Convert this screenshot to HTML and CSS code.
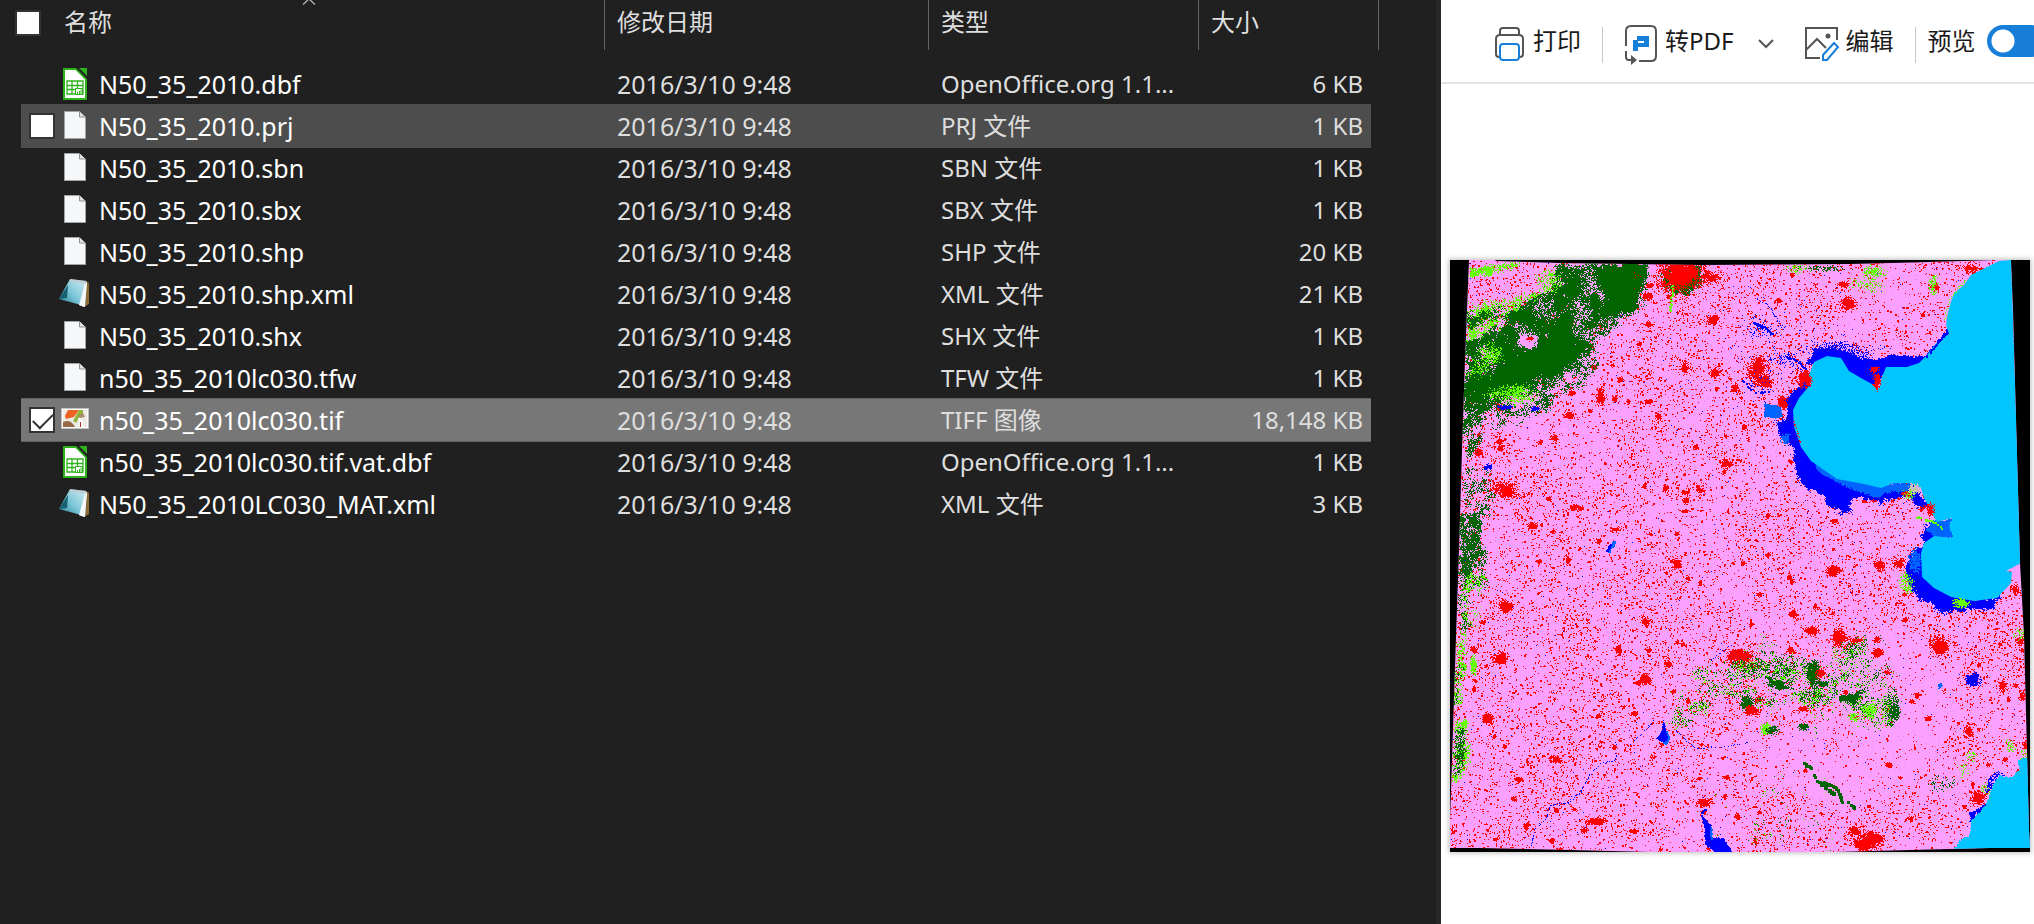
FILE: index.html
```html
<!DOCTYPE html>
<html lang="zh-CN">
<head>
<meta charset="utf-8">
<title>N50_35_2010</title>
<link rel="stylesheet" href="styles.css">
</head>
<body>
<svg class="defs" aria-hidden="true">
  <symbol id="i-page" viewBox="0 0 22 28">
    <path d="M.5.5h15l6 6v21H.5z" fill="#f6f7f8" stroke="#a3a6a9"/>
    <path d="M15.500.5v5.500h6" fill="#dfe1e3" stroke="#8e9194"/>
  </symbol>
  <symbol id="i-calc" viewBox="0 0 24 32">
    <path d="M1 1h12l10 10v20H1z" fill="#fff" stroke="#2fb31c" stroke-width="2" stroke-linejoin="round"/>
    <path d="M13 0l11 11V8l-8-8z" fill="#222"/>
    <path d="M16 0h8v8z" fill="#2fb31c"/>
    <path d="M4 13h16v13H4zM4 17.500h16M4 21.500h16M9 13v13M14.500 13v13" fill="none" stroke="#2fb31c" stroke-width="1.300"/>
    <path d="M12.500 20.500h7v6h-7z" fill="#fff" stroke="#2fb31c"/>
    <path d="M14.500 26v-2M16.500 26v-3M18 26v-4.500" stroke="#2fb31c"/>
  </symbol>
  <symbol id="i-note" viewBox="0 0 31 30">
    <linearGradient id="g-note" x1="0" y1="1" x2="1" y2="0"><stop offset="0" stop-color="#247f95"/><stop offset=".45" stop-color="#7cc6d8"/><stop offset="1" stop-color="#d3edf3"/></linearGradient>
    <path d="M27 3l3 2v21l-5 3z" fill="#8a6a35"/>
    <path d="M25 3l3 1-3 25-5-2z" fill="#dfe6e8"/>
    <path d="M11 1l16 2-5 24L0 21z" fill="url(#g-note)"/>
    <path d="M0 21L9 7 8 20z" fill="#17606f"/>
    <path d="M20 27l6-22 2 0-2 24z" fill="#f4f8f9"/>
    <path d="M11 2.500l16 2" stroke="#c3c7c9" stroke-width="3" stroke-dasharray="1.500 1"/>
  </symbol>
  <symbol id="i-tif" viewBox="0 0 28 21">
    <path d="M.5.5h27v20H.5z" fill="#fff" stroke="#c2c2c2"/>
    <path d="M2 2h24v17H2z" fill="#eceae4"/>
    <path d="M7 2h11l-5 7-8 2-1-3z" fill="#ee6322"/>
    <path d="M18 2h4v5l-4 3-3 5-3-2z" fill="#8fb43a"/>
    <path d="M17 8l5-3 2 4-5 1z" fill="#a88a66"/>
    <path d="M2 14c5-2 9-1 12 5H2z" fill="#966a45"/>
    <path d="M18 10l2 8M21 12v7" stroke="#fff" stroke-width="2"/>
    <path d="M19.500 14v5" stroke="#b5322e"/>
  </symbol>
</svg>
<main class="window">
  <section class="files" aria-label="文件">
    <svg class="sort" viewBox="0 0 14 5"><path d="M1 4.500L7-1l6 5.500" fill="none" stroke="#b5b5b5" stroke-width="1.300"/></svg>
    <table class="list">
      <colgroup><col class="c-name"><col class="c-date"><col class="c-type"><col class="c-size"><col class="c-end"></colgroup>
      <thead>
        <tr>
          <th><div class="cell head-name"><input type="checkbox" class="tick" aria-label="全选">名称</div></th>
          <th>修改日期</th><th>类型</th><th>大小</th><th></th>
        </tr>
      </thead>
      <tbody>
        <tr><td><div class="cell"><input type="checkbox" class="tick" aria-label="N50_35_2010.dbf"><svg class="ico"><use href="#i-calc" x="4" width="24" height="32"/></svg>N50_35_2010.dbf</div></td><td>2016/3/10 9:48</td><td>OpenOffice.org 1.1...</td><td>6 KB</td><td></td></tr>
        <tr class="hover"><td><div class="cell"><input type="checkbox" class="tick" aria-label="N50_35_2010.prj"><svg class="ico"><use href="#i-page" x="5" y="1" width="22" height="28"/></svg>N50_35_2010.prj</div></td><td>2016/3/10 9:48</td><td>PRJ 文件</td><td>1 KB</td><td></td></tr>
        <tr><td><div class="cell"><input type="checkbox" class="tick" aria-label="N50_35_2010.sbn"><svg class="ico"><use href="#i-page" x="5" y="1" width="22" height="28"/></svg>N50_35_2010.sbn</div></td><td>2016/3/10 9:48</td><td>SBN 文件</td><td>1 KB</td><td></td></tr>
        <tr><td><div class="cell"><input type="checkbox" class="tick" aria-label="N50_35_2010.sbx"><svg class="ico"><use href="#i-page" x="5" y="1" width="22" height="28"/></svg>N50_35_2010.sbx</div></td><td>2016/3/10 9:48</td><td>SBX 文件</td><td>1 KB</td><td></td></tr>
        <tr><td><div class="cell"><input type="checkbox" class="tick" aria-label="N50_35_2010.shp"><svg class="ico"><use href="#i-page" x="5" y="1" width="22" height="28"/></svg>N50_35_2010.shp</div></td><td>2016/3/10 9:48</td><td>SHP 文件</td><td>20 KB</td><td></td></tr>
        <tr><td><div class="cell"><input type="checkbox" class="tick" aria-label="N50_35_2010.shp.xml"><svg class="ico"><use href="#i-note" width="31" height="30"/></svg>N50_35_2010.shp.xml</div></td><td>2016/3/10 9:48</td><td>XML 文件</td><td>21 KB</td><td></td></tr>
        <tr><td><div class="cell"><input type="checkbox" class="tick" aria-label="N50_35_2010.shx"><svg class="ico"><use href="#i-page" x="5" y="1" width="22" height="28"/></svg>N50_35_2010.shx</div></td><td>2016/3/10 9:48</td><td>SHX 文件</td><td>1 KB</td><td></td></tr>
        <tr><td><div class="cell"><input type="checkbox" class="tick" aria-label="n50_35_2010lc030.tfw"><svg class="ico"><use href="#i-page" x="5" y="1" width="22" height="28"/></svg>n50_35_2010lc030.tfw</div></td><td>2016/3/10 9:48</td><td>TFW 文件</td><td>1 KB</td><td></td></tr>
        <tr class="selected"><td><div class="cell"><input type="checkbox" class="tick" checked aria-label="n50_35_2010lc030.tif"><svg class="ico"><use href="#i-tif" x="2" y="4" width="28" height="21"/></svg>n50_35_2010lc030.tif</div></td><td>2016/3/10 9:48</td><td>TIFF 图像</td><td>18,148 KB</td><td></td></tr>
        <tr><td><div class="cell"><input type="checkbox" class="tick" aria-label="n50_35_2010lc030.tif.vat.dbf"><svg class="ico"><use href="#i-calc" x="4" width="24" height="32"/></svg>n50_35_2010lc030.tif.vat.dbf</div></td><td>2016/3/10 9:48</td><td>OpenOffice.org 1.1...</td><td>1 KB</td><td></td></tr>
        <tr><td><div class="cell"><input type="checkbox" class="tick" aria-label="N50_35_2010LC030_MAT.xml"><svg class="ico"><use href="#i-note" width="31" height="30"/></svg>N50_35_2010LC030_MAT.xml</div></td><td>2016/3/10 9:48</td><td>XML 文件</td><td>3 KB</td><td></td></tr>
      </tbody>
    </table>
  </section>
  <section class="preview" aria-label="预览">
    <header class="toolbar">
      <button class="tool" type="button">
        <svg width="30" height="34" viewBox="0 0 30 34" fill="none" stroke-width="2"><path d="M5 7V4q0-3 3-3h13q3 0 3 3v3M5 30H4q-3 0-3-3V12q0-4 4-4h19q4 0 4 4v15q0 3-3 3h-1" stroke="#555"/><rect x="5" y="17" width="19" height="16" rx="3" fill="#fff" stroke="#187fd8"/></svg>打印</button>
      <span class="rule"></span>
      <button class="tool pdf" type="button">
        <svg width="34" height="40" viewBox="0 0 34 40" fill="none"><path d="M2 22V7q0-5 5-5h20q5 0 5 5v25q0 5-5 5H15M2 27v6q0 3 3 3h3" stroke="#555" stroke-width="2"/><path d="M7 31l6 5-6 5z" fill="#555"/><path d="M13 12h12v11H14v4H9V16h4z" fill="#187fd8"/><path d="M14 17h6v2h-6z" fill="#fff"/></svg>转PDF</button>
      <button class="more" type="button" aria-label="更多"><svg width="18" height="12" viewBox="0 0 18 12"><path d="M2 2l7 7 7-7" fill="none" stroke="#555" stroke-width="2"/></svg></button>
      <button class="tool edit" type="button">
        <svg width="36" height="36" viewBox="0 0 36 36" fill="none" stroke="#555" stroke-width="2"><path d="M32 14V2H1v30h14M1 24l11-11 9 9"/><circle cx="23" cy="10" r="2.500" fill="#555" stroke="none"/><path d="M18 34v-5l11-12 4 4-11 13z" stroke="#187fd8"/></svg>编辑</button>
      <span class="rule"></span>
      <label class="switch">预览<input type="checkbox" checked></label>
    </header>
    <div class="stage"><canvas id="map" class="map" width="580" height="592" role="img" aria-label="n50_35_2010lc030.tif"></canvas></div>
  </section>
</main>
<script src="map.js"></script>
</body>
</html>
```
FILE: styles.css
```css
* { box-sizing: border-box; }
body {
  margin: 0;
  background: #fff;
  font-family: "Noto Sans", "Noto Sans CJK SC", sans-serif;
}
.defs { position: absolute; width: 0; height: 0; }
.window {
  display: grid;
  grid-template-columns: 1441fr 593fr;
  min-height: 100vh;
}
.files {
  position: relative;
  min-width: 0;
  overflow: hidden;
  background: #202020;
  border-right: 5px solid #272727;
  color: #dedede;
  padding-left: 21px;
}
.sort { position: absolute; left: 302px; top: 0; width: 14px; height: 5px; }
.list {
  width: 1358px;
  table-layout: fixed;
  border-collapse: separate;
  border-spacing: 0;
  font-size: 24px;
  line-height: 32px;
}
.c-name { width: 583px; }
.c-date { width: 324px; }
.c-type { width: 270px; }
.c-size { width: 173px; }
.c-end { width: 8px; }
th {
  height: 50px;
  padding: 0 12px 6px;
  font-weight: 400;
  text-align: left;
  border-left: 1px solid #636363;
}
th:first-child { padding-left: 0; border-left: 0; }
th:last-child { padding: 0; border-left: 0; border-right: 1px solid #636363; }
thead::after { content: ""; display: block; height: 13px; }
td { height: 42px; padding: 0 12px 0 13px; white-space: nowrap; }
td:first-child { padding-left: 8px; color: #fff; }
td:nth-child(-n+2) { font-size: 25px; }
td:nth-child(4) { text-align: right; padding-right: 8px; }
td:last-child { padding: 0; }
.cell { display: flex; align-items: center; }
.ico { width: 32px; height: 32px; margin: 0 8px 0 4px; flex: none; }
.tick {
  appearance: none;
  flex: none;
  width: 26px;
  height: 26px;
  margin: 0;
  background: #fff;
  border: 2px solid #333;
  visibility: hidden;
}
.head-name .tick { margin: 2px 23px 0 -6px; }
.head-name .tick, .hover .tick, .selected .tick { visibility: visible; }
.tick:checked { display: grid; }
.tick:checked::after {
  content: "";
  width: 18px;
  height: 9px;
  margin: 4px 2px;
  border: solid #333;
  border-width: 0 0 2px 2px;
  transform: rotate(-45deg);
}
.hover td:not(:last-child) { background: #4d4d4d; box-shadow: 0 -1px #4d4d4d, 0 1px #4d4d4d; }
.selected td:not(:last-child) { background: #777; box-shadow: 0 -1px #636363, 0 1px #636363; }

.preview { min-width: 0; overflow: hidden; }
.toolbar {
  display: flex;
  align-items: center;
  height: 84px;
  padding: 0 0 0 54px;
  border-bottom: 2px solid #e3e3e3;
  color: #1a1a1a;
  font-size: 24px;
  line-height: 32px;
  white-space: nowrap;
}
.toolbar > * { flex: none; }
.tool {
  display: flex;
  align-items: center;
  gap: 8px;
  padding: 0;
  border: 0;
  background: none;
  color: inherit;
  font: inherit;
}
.tool svg { overflow: visible; margin-top: 10px; margin-bottom: 4px; }
.rule { width: 1px; height: 36px; margin: 8px 12px 0 21px; background: #c8c8c8; }
.pdf { margin-left: 9px; gap: 7px; }
.more { display: flex; padding: 6px 0 0; margin: 0 30px 0 23px; border: 0; background: none; }
.edit { gap: 5px; }
.switch { display: flex; align-items: center; gap: 11px; }
.switch input {
  appearance: none;
  width: 60px;
  height: 32px;
  margin: 8px 0;
  border-radius: 16px;
  background: radial-gradient(circle at 16px 16px, #fff 11px, #187fd8 12px);
}
.stage { padding: 176px 4px 0 9px; }
.map { display: block; width: 100%; background: #000; box-shadow: 0 0 5px 1px #bbb; }
```
FILE: map.js
```js
const W = 580, H = 592;
const ctx = document.getElementById('map').getContext('2d');
const PINK = '#fba0ff', RED = '#ff0000', DARK = '#006400', LIME = '#64ff00',
      BLUE = '#0000ff', MID = '#0064ff', SEA = '#00c5ff';

let seed = 20100350;
const rnd = () => {
  seed = (seed + 0x6d2b79f5) | 0;
  let t = Math.imul(seed ^ (seed >>> 15), 1 | seed);
  t = (t + Math.imul(t ^ (t >>> 7), 61 | t)) ^ t;
  return ((t ^ (t >>> 14)) >>> 0) / 4294967296;
};
const grid = Float32Array.from({ length: 65536 }, rnd);
const lattice = (x, y) => grid[((y & 255) << 8) | (x & 255)];
const noise = (x, y) => {
  const i = Math.floor(x), j = Math.floor(y), u = x - i, v = y - j;
  const a = lattice(i, j), b = lattice(i + 1, j), c = lattice(i, j + 1), d = lattice(i + 1, j + 1);
  return (a + (b - a) * u) * (1 - v) + (c + (d - c) * u) * v;
};
const rough = (x, y) => noise(x / 14, y / 14) * 0.4 + noise(x / 5, y / 5) * 0.35 + noise(x / 2, y / 2) * 0.25;

const dot = (c, x, y, w = 1, h = 1) => { ctx.fillStyle = c; ctx.fillRect(x | 0, y | 0, w, h); };
const trace = pts => {
  const p = new Path2D();
  for (let i = 0; i < pts.length; i += 2) p.lineTo(pts[i], pts[i + 1]);
  p.closePath();
  return p;
};
/* polygon with a ragged edge and gaps; fill = share of pixels kept, ragged = edge shift */
const area = (c, pts, ragged = 2, fill = 1) => {
  const p = trace(pts);
  const xs = pts.filter((_, i) => i % 2 === 0), ys = pts.filter((_, i) => i % 2);
  const x1 = Math.max(...xs) + ragged, y1 = Math.max(...ys) + ragged;
  for (let y = Math.min(...ys) - ragged; y <= y1; y++)
    for (let x = Math.min(...xs) - ragged; x <= x1; x++) {
      const dx = (rough(x + 300, y) - 0.5) * 4 * ragged + (rnd() - 0.5) * ragged;
      const dy = (rough(x, y + 500) - 0.5) * 4 * ragged + (rnd() - 0.5) * ragged;
      if ((fill >= 1 || rough(x * 1.3 + 70, y * 1.3) * 0.7 + rnd() * 0.3 < 0.27 + fill * 0.46) &&
          ctx.isPointInPath(p, x + dx, y + dy)) dot(c, x, y);
    }
};
const blob = (c, cx, cy, rx, ry = rx, fill = 1) => {
  for (let y = -2 * ry; y <= 2 * ry; y++)
    for (let x = -2 * rx; x <= 2 * rx; x++) {
      const d = (x * x) / (rx * rx) + (y * y) / (ry * ry);
      const n = rough(cx + x, cy + y) + (rnd() - 0.5) * 0.35;
      if (fill >= 1 ? d < 4 * n * n : d < 3 && n * 0.5 + rnd() * 0.5 < fill * (1 - d / 3.2)) dot(c, cx + x, cy + y);
    }
};
const stream = (c, pts, w = 1, keep = 0.8) => {
  for (let i = 0; i + 3 < pts.length; i += 2) {
    const n = Math.hypot(pts[i + 2] - pts[i], pts[i + 3] - pts[i + 1]);
    for (let k = 0; k < n; k++)
      if (rnd() < keep) dot(c, pts[i] + (pts[i + 2] - pts[i]) * k / n + rnd() * 1.5, pts[i + 1] + (pts[i + 3] - pts[i + 1]) * k / n + rnd() * 1.5, w, w);
  }
};

ctx.fillStyle = '#000';
ctx.fillRect(0, 0, W, H);
const frame = trace([19, 0, 45, 0, 46, 1, 110, 3, 250, 5, 400, 4, 480, 2, 545, 0, 561, 0, 563, 50, 570, 303, 574, 375, 579, 570, 580, 588, 540, 588, 460, 590, 385, 592, 200, 592, 120, 590, 30, 588, 0, 588, 0, 560, 6, 377, 9, 290, 12, 190, 15, 100]);
ctx.save();
ctx.clip(frame);
dot(PINK, 0, 0, W, H);

/* villages */
for (let y = 0; y < H; y++)
  for (let x = 0; x < W; x++) {
    const sparse = Math.hypot((x - 445) / 60, (y - 440) / 70) < 1 || Math.hypot((x - 390) / 80, (y - 500) / 40) < 1 ? 0.35 : 1;
    const t = 0.05 * sparse * (0.45 + 1.2 * noise(x / 40 + 9, y / 40)) * (rough(x, y) > 0.5 ? 1.5 : 0.7);
    const r = rnd();
    if (r < t) dot(RED, x, y, rnd() < 0.3 ? 2 : 1, rnd() < 0.25 ? 2 : 1);
    else if (r > 0.985) dot(rnd() < 0.5 ? '#f07fc8' : '#e08be8', x, y);
    else if (r > 0.9835) dot(BLUE, x, y);
  }
for (let i = 0; i < 170; i++) blob(RED, (rnd() * W) | 0, (rnd() * H) | 0, 2 + (rnd() * 2 | 0), 2 + (rnd() * 1.5 | 0));

/* western mountains */
area(LIME, [19, 8, 70, 1, 68, 7, 30, 15, 19, 15], 3, 0.6);
area(LIME, [17, 42, 80, 36, 110, 8, 118, 30, 70, 60, 17, 88], 5, 0.4);
area(DARK, [17, 52, 45, 44, 60, 60, 18, 66], 5, 0.4);
area(DARK, [108, 4, 200, 4, 196, 28, 190, 44, 172, 54, 152, 62, 140, 74, 136, 92, 124, 108, 112, 116, 96, 122, 78, 134, 60, 140, 40, 150, 22, 168, 12, 182, 14, 150, 16, 82, 50, 68, 58, 52, 75, 42, 95, 32, 106, 15], 5, 0.86);
area(DARK, [150, 4, 197, 4, 194, 28, 184, 42, 165, 48, 150, 35], 3);
area(DARK, [60, 100, 100, 70, 130, 70, 130, 98, 100, 115, 20, 140, 18, 118], 5);
area(DARK, [130, 62, 178, 50, 198, 40, 170, 64, 148, 80, 150, 100, 132, 124, 110, 140, 80, 158, 30, 172, 14, 186, 14, 160, 60, 142, 110, 110], 5, 0.4);
area(DARK, [14, 184, 30, 174, 32, 182, 16, 198], 3, 0.5);
blob(PINK, 78, 79, 8, 7);
blob(PINK, 132, 58, 9, 18, 0.45);
blob(PINK, 94, 50, 10, 12, 0.45);
blob(PINK, 138, 20, 8, 14, 0.45);
blob(RED, 79, 78, 3, 2);
blob(LIME, 37, 94, 13, 11, 0.5);
blob(LIME, 60, 134, 22, 8, 0.6);
blob(PINK, 50, 140, 22, 8, 0.35);
blob(LIME, 100, 20, 12, 9, 0.4);
blob(LIME, 30, 110, 12, 10, 0.35);
area(DARK, [12, 206, 38, 212, 42, 250, 30, 260, 34, 300, 32, 328, 22, 345, 10, 380, 8, 330, 10, 260], 5, 0.38);
area(DARK, [10, 254, 32, 250, 28, 290, 24, 318, 10, 312], 4, 0.62);
area(LIME, [14, 318, 34, 310, 36, 335, 26, 360, 12, 368], 5, 0.35);
area(LIME, [6, 375, 12, 370, 14, 440, 4, 448], 4, 0.6);
area(DARK, [5, 405, 11, 405, 9, 445, 4, 445], 3, 0.5);
area(LIME, [4, 460, 16, 462, 20, 495, 14, 515, 3, 522], 4, 0.6);
area(DARK, [4, 470, 14, 470, 15, 500, 8, 516, 3, 512], 3, 0.6);
blob(LIME, 23, 405, 3, 8, 0.9);
area(DARK, [210, 8, 250, 6, 252, 22, 238, 32, 212, 28], 4, 0.75);
stream(LIME, [222, 22, 219, 50], 2);

/* southern hills */
[[345, 408, 30, 14, .45], [365, 435, 16, 9, .5], [300, 408, 24, 14, .42], [315, 440, 14, 8, .45], [410, 395, 22, 20, .44], [420, 450, 20, 18, .45], [440, 445, 8, 18, .5], [265, 425, 26, 20, .38], [245, 440, 20, 14, .36], [230, 460, 14, 8, .35], [330, 560, 50, 40, .25], [400, 430, 40, 34, .36], [310, 420, 34, 30, .36]].forEach(([x, y, a, b, f]) => {
  blob(LIME, x - 3, y + 2, a, b, f * 0.78);
  blob(DARK, x, y, a, b, f * 0.85);
});
area(DARK, [316, 416, 330, 420, 345, 428, 330, 428, 318, 424], 2, .8);
area(DARK, [386, 436, 402, 434, 418, 428, 404, 442, 388, 442], 2, .8);
blob(DARK, 363, 413, 5, 11, .9);
blob(DARK, 373, 423, 6, 3);
blob(DARK, 297, 443, 6, 6, .9);
blob(LIME, 420, 449, 7, 7, .7);
blob(LIME, 404, 457, 6, 4, .7);
blob(DARK, 445, 450, 4, 9, .8);
blob(LIME, 316, 469, 5, 5, .8);
blob(DARK, 322, 470, 5, 4, .8);
blob(DARK, 353, 467, 5, 3);
stream(DARK, [353, 502, 362, 508], 3, .6);
stream(DARK, [362, 514, 369, 522], 3, .6);
stream(DARK, [367, 520, 385, 526, 391, 540], 3);
stream(DARK, [370, 523, 382, 532], 4, .6);
stream(DARK, [396, 540, 404, 547], 3, .6);
blob(DARK, 490, 522, 12, 8, .4);
[[521, 497], [512, 508], [535, 530], [560, 485], [570, 373], [575, 495]].forEach(([x, y]) => blob(LIME, x, y, 6, 6, .45));
blob(LIME, 483, 25, 4, 9, .7);
blob(LIME, 423, 11, 10, 5, .6);
blob(LIME, 415, 24, 14, 8, .35);
blob(DARK, 375, 8, 24, 3, .45);
blob(LIME, 345, 9, 12, 4, .45);

/* towns */
[[232, 15, 19, 15], [262, 17, 7, 4], [196, 36, 5, 3], [150, 136, 5, 8], [57, 230, 10, 7], [262, 60, 5, 4], [198, 64, 4, 3], [234, 107, 4, 4], [264, 112, 5, 4], [284, 128, 4, 4], [207, 156, 3, 4], [277, 203, 5, 4], [250, 230, 4, 3], [124, 247, 4, 3], [82, 266, 4, 3], [165, 269, 7, 3], [120, 155, 4, 3], [104, 178, 4, 3], [308, 108, 10, 12], [314, 121, 6, 5], [399, 43, 8, 6], [393, 24, 6, 3], [355, 116, 7, 7], [333, 142, 5, 5], [521, 8, 8, 5], [462, 233, 4, 3], [480, 249, 4, 6], [428, 304, 5, 4], [448, 303, 6, 5], [384, 310, 8, 4], [54, 346, 6, 6], [51, 398, 7, 5], [24, 389, 4, 3], [37, 458, 5, 5], [105, 499, 6, 3], [143, 561, 8, 3], [226, 303, 5, 5], [195, 361, 4, 4], [195, 419, 5, 5], [218, 404, 4, 3], [291, 396, 11, 7], [388, 378, 6, 8], [406, 380, 7, 3], [361, 370, 6, 4], [490, 387, 8, 8], [301, 451, 6, 4], [340, 390, 4, 4], [552, 425, 4, 5], [518, 471, 4, 5], [528, 538, 7, 6], [252, 543, 6, 4], [417, 582, 10, 10], [405, 570, 6, 4], [305, 581, 3, 5], [354, 448, 5, 3], [370, 413, 4, 4], [437, 412, 4, 3], [429, 392, 4, 3], [572, 436, 3, 5], [575, 485, 3, 5], [565, 330, 4, 5], [570, 380, 5, 4]].forEach(t => {
  blob(RED, ...t);
  blob(RED, t[0], t[1], t[2] * 2, t[3] * 2, .27);
});

/* rivers and lakes */
blob(BLUE, 345, 95, 55, 40, .2);
blob(BLUE, 315, 68, 18, 14, .36);
blob(BLUE, 305, 130, 18, 14, .34);
blob(BLUE, 338, 98, 14, 8, .42);
stream(BLUE, [303, 62, 312, 66, 322, 73], 2);
stream(BLUE, [306, 38, 318, 45, 326, 58, 332, 68], 1);
stream(BLUE, [332, 95, 345, 99, 355, 108], 2, .6);
stream(BLUE, [290, 118, 304, 132, 318, 130], 2, .3);
stream(BLUE, [225, 470, 245, 488, 270, 486, 300, 482], 1, .35);
stream(BLUE, [203, 460, 190, 474, 180, 483], 1, .4);
stream(BLUE, [166, 492, 164, 500, 150, 503, 138, 515], 1, .6);
stream(BLUE, [138, 515, 130, 532, 117, 542, 100, 545, 95, 558, 84, 568, 83, 576, 80, 592], 1, .6);
stream(BLUE, [260, 400, 275, 388, 284, 384], 1, .5);
stream(MID, [162, 280, 158, 291], 3);
stream(BLUE, [159, 284, 156, 291], 2);
blob(BLUE, 38, 206, 4, 3);
blob(BLUE, 55, 147, 6, 2);
blob(BLUE, 85, 148, 4, 2);
blob(BLUE, 523, 419, 6, 6);
blob(MID, 490, 425, 3, 3);
area(MID, [216, 470, 220, 478, 217, 485, 212, 482], 1);
area(BLUE, [213, 460, 216, 472, 218, 478, 215, 482, 206, 478, 211, 472], 1);
area(BLUE, [250, 552, 255, 558, 261, 565, 261, 577, 273, 577, 282, 592, 266, 592, 255, 584, 254, 570], 1);
stream(BLUE, [254, 548, 251, 554], 2);
stream(MID, [260, 566, 260, 578], 2);

/* coast */
blob(BLUE, 385, 90, 36, 8, .5);
blob(BLUE, 410, 108, 14, 12, .6);
area(BLUE, [357, 105, 364, 89, 380, 87, 395, 92, 410, 98, 425, 100, 440, 95, 462, 96, 475, 96, 490, 76, 500, 64, 500, 76, 478, 100, 460, 108, 434, 110, 428, 125, 420, 124, 404, 118, 390, 105, 365, 106], 2);
area(BLUE, [346, 126, 360, 122, 362, 200, 390, 215, 431, 226, 465, 226, 480, 247, 468, 246, 455, 234, 445, 238, 430, 242, 420, 237, 403, 236, 400, 252, 395, 254, 380, 245, 368, 234, 352, 222, 345, 209, 344, 190, 330, 172, 326, 160, 338, 156, 336, 140], 3);
area(BLUE, [345, 195, 362, 205, 400, 232, 402, 252, 392, 254, 376, 244, 366, 230, 350, 224], 5, .9);
area(BLUE, [476, 262, 490, 270, 485, 325, 524, 338, 550, 336, 542, 346, 525, 350, 500, 352, 485, 346, 470, 338, 460, 325, 455, 310, 460, 300, 468, 288], 4);
area(MID, [362, 202, 388, 214, 431, 224, 460, 222, 462, 230, 440, 232, 425, 236, 395, 226, 370, 214], 2);
area(MID, [480, 260, 502, 258, 500, 266, 503, 278, 484, 280, 476, 270], 2);
area(MID, [314, 143, 330, 146, 333, 156, 324, 158, 314, 156], 1);
blob(MID, 335, 178, 5, 5);
blob(MID, 465, 300, 5, 10, .8);
blob(LIME, 457, 323, 6, 9, .6);
const sea = trace([561, 0, 549, 1, 531, 10, 521, 15, 514, 25, 504, 33, 500, 45, 497, 57, 496, 65, 499, 74, 487, 82, 477, 95, 469, 103, 457, 107, 436, 107, 432, 117, 429, 128, 411, 118, 399, 111, 391, 98, 377, 96, 364, 102, 359, 115, 361, 124, 349, 138, 343, 150, 344, 167, 351, 187, 361, 201, 387, 219, 414, 224, 431, 228, 444, 223, 461, 223, 471, 228, 474, 238, 482, 253, 487, 262, 502, 258, 499, 266, 502, 278, 484, 276, 474, 283, 471, 293, 472, 317, 484, 328, 501, 337, 524, 341, 547, 338, 561, 323, 562, 312, 556, 311, 571, 303]);
ctx.fillStyle = SEA;
ctx.fill(sea);
area(MID, [487, 262, 502, 258, 499, 266, 502, 278, 486, 274, 480, 266], 1);
blob(RED, 354, 118, 6, 7);
blob(RED, 427, 121, 3, 7);
blob(RED, 424, 109, 5, 3);
blob(RED, 480, 250, 4, 6);
blob(RED, 457, 233, 5, 2);
blob('#c3c3af', 463, 228, 5, 5, .8);
blob(LIME, 458, 234, 8, 5, .5);
stream(LIME, [466, 256, 480, 260, 492, 267], 2);
stream(LIME, [493, 60, 500, 38, 515, 18], 1);
stream(RED, [343, 160, 350, 182], 1);
stream(BLUE, [476, 96, 488, 80, 496, 72], 2);
blob(LIME, 508, 343, 8, 4, .9);
blob(BLUE, 495, 345, 9, 6, .9);
area(BLUE, [536, 532, 540, 515, 550, 512, 555, 518, 543, 528], 2, .7);
area(BLUE, [520, 553, 535, 545, 530, 556, 520, 562], 2, .8);
area(SEA, [579, 500, 573, 497, 567, 500, 569, 510, 562, 516, 553, 517, 548, 515, 541, 530, 535, 545, 530, 552, 521, 560, 519, 575, 510, 581, 503, 589, 580, 589], 1);
ctx.restore();
```
